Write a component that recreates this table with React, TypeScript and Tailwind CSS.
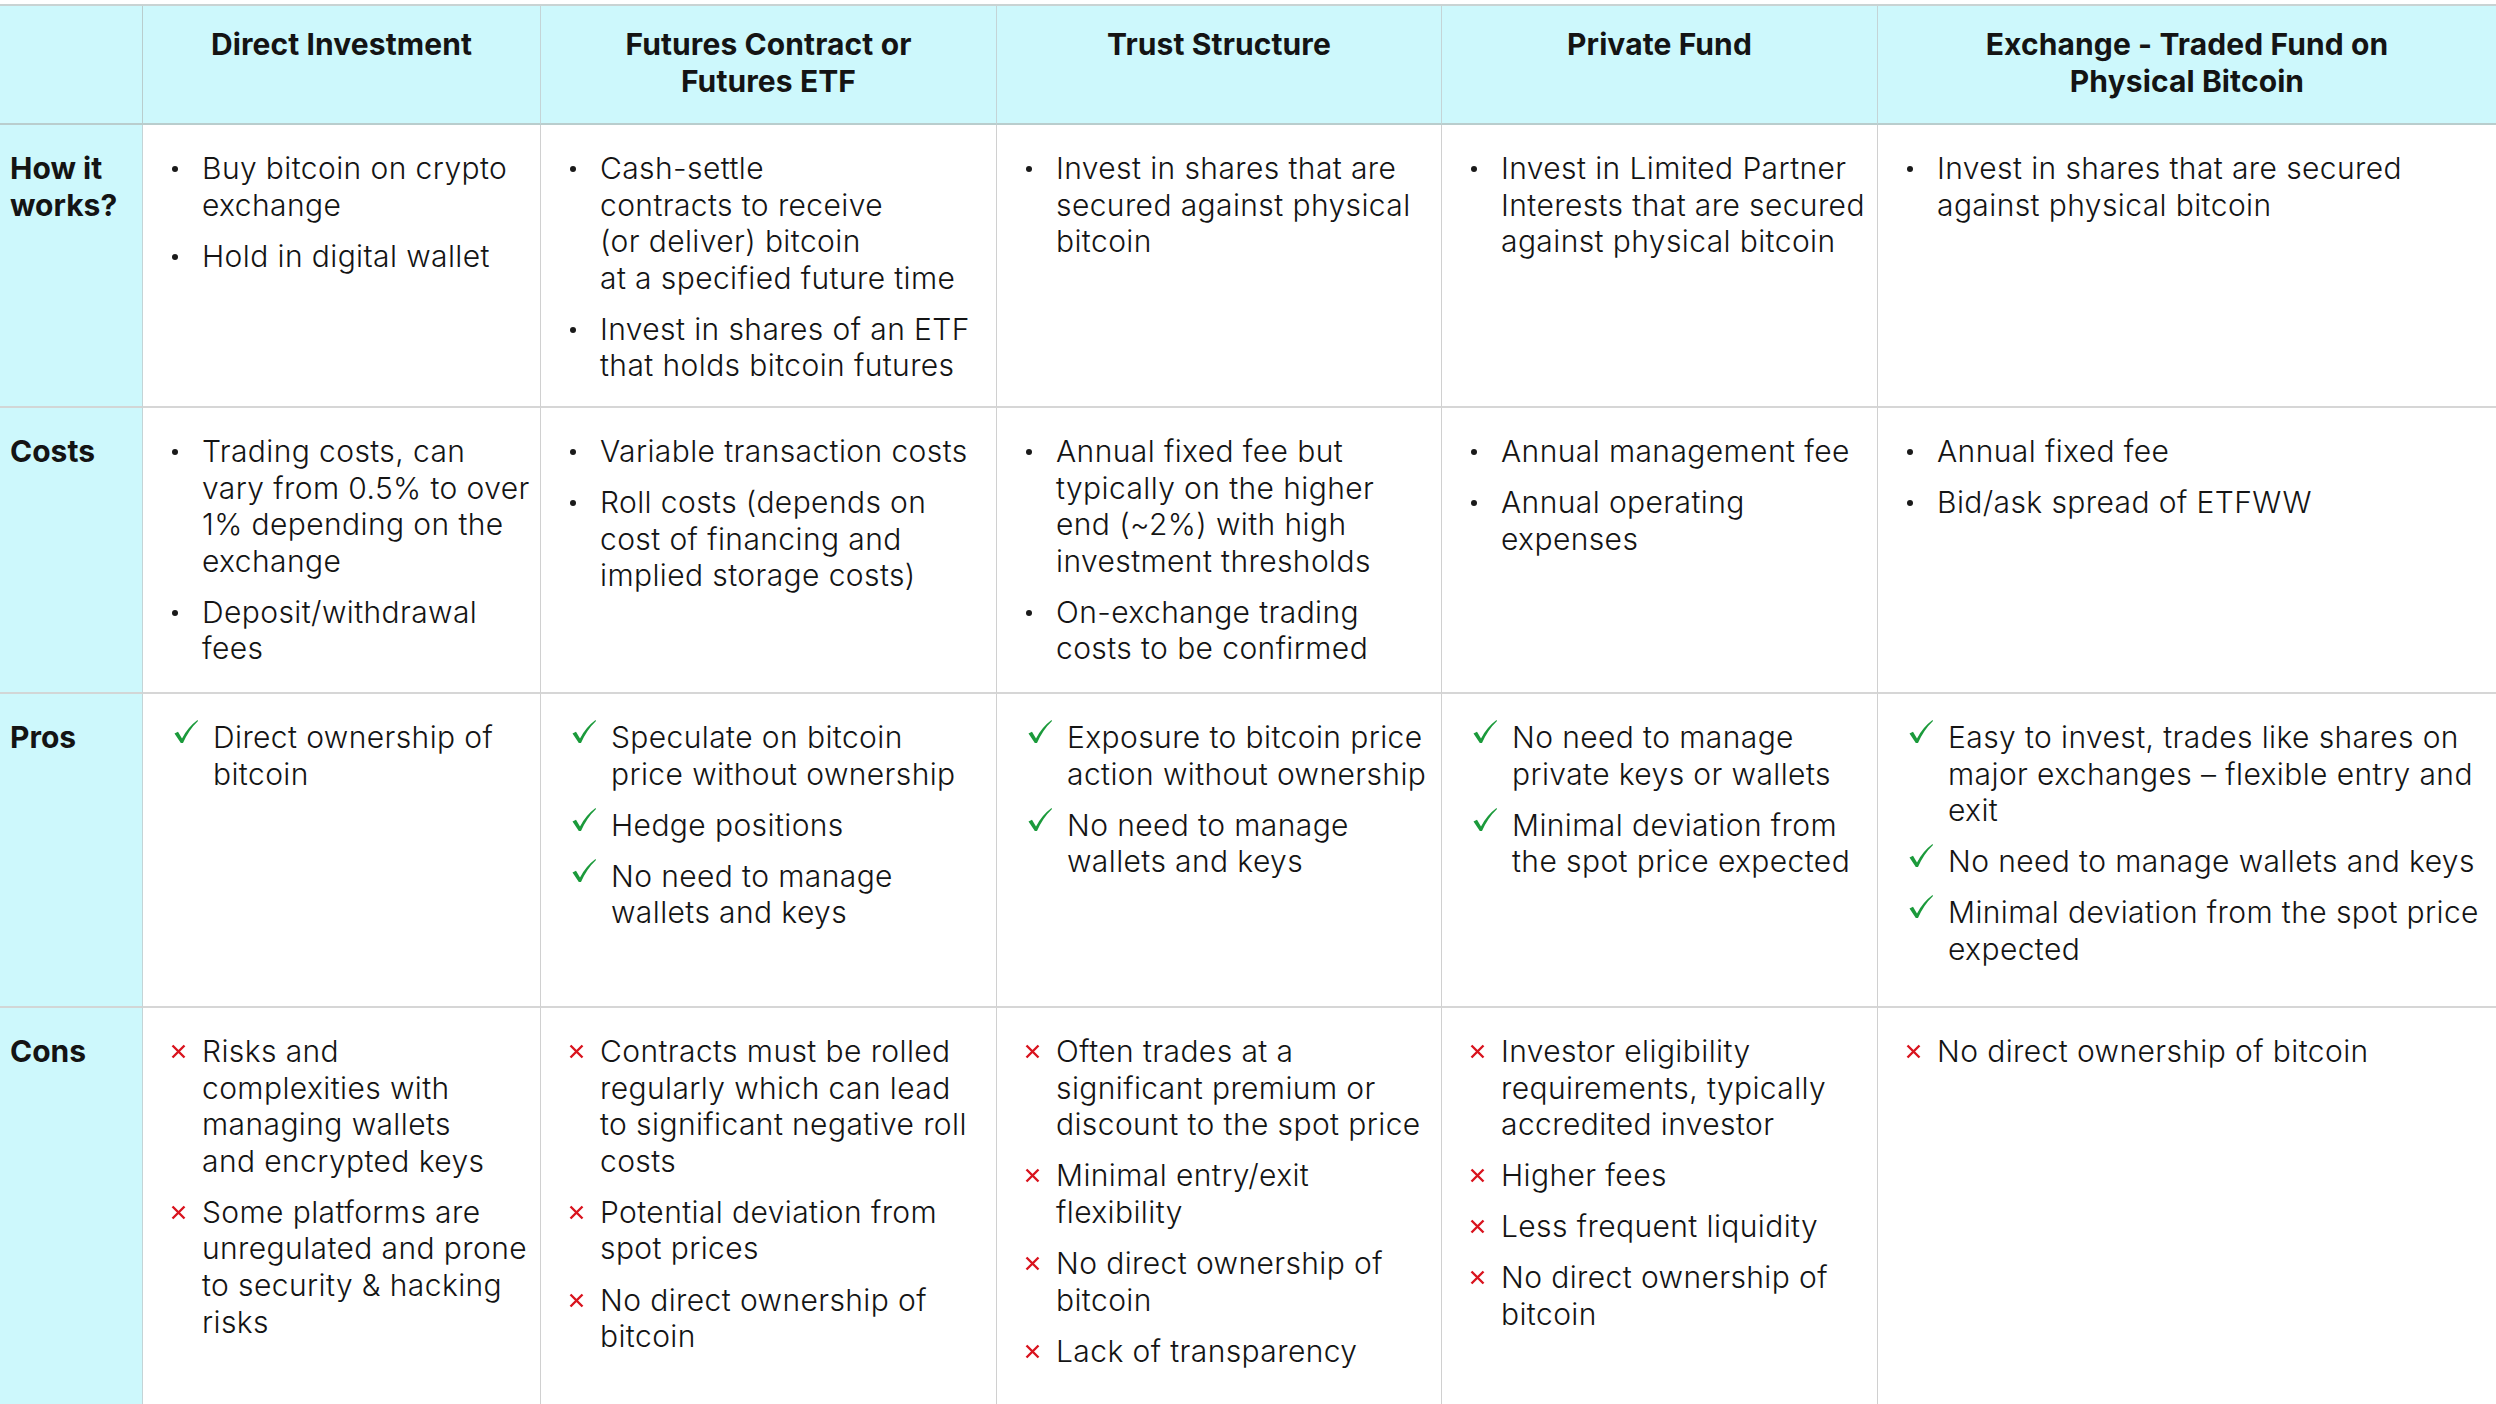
import React from "react";

type Kind = "dot" | "check" | "cross";

interface Column {
  title: string[];
  how: string[][];
  costs: string[][];
  pros: string[][];
  cons: string[][];
}

const columns: Column[] = [
  {
    title: ["Direct Investment"],
    how: [["Buy bitcoin on crypto", "exchange"], ["Hold in digital wallet"]],
    costs: [
      ["Trading costs, can", "vary from 0.5% to over", "1% depending on the", "exchange"],
      ["Deposit/withdrawal", "fees"],
    ],
    pros: [["Direct ownership of", "bitcoin"]],
    cons: [
      ["Risks and", "complexities with", "managing wallets", "and encrypted keys"],
      ["Some platforms are", "unregulated and prone", "to security & hacking", "risks"],
    ],
  },
  {
    title: ["Futures Contract or", "Futures ETF"],
    how: [
      ["Cash-settle", "contracts to receive", "(or deliver) bitcoin", "at a specified future time"],
      ["Invest in shares of an ETF", "that holds bitcoin futures"],
    ],
    costs: [
      ["Variable transaction costs"],
      ["Roll costs (depends on", "cost of financing and", "implied storage costs)"],
    ],
    pros: [
      ["Speculate on bitcoin", "price without ownership"],
      ["Hedge positions"],
      ["No need to manage", "wallets and keys"],
    ],
    cons: [
      ["Contracts must be rolled", "regularly which can lead", "to significant negative roll", "costs"],
      ["Potential deviation from", "spot prices"],
      ["No direct ownership of", "bitcoin"],
    ],
  },
  {
    title: ["Trust Structure"],
    how: [["Invest in shares that are", "secured against physical", "bitcoin"]],
    costs: [
      ["Annual fixed fee but", "typically on the higher", "end (~2%) with high", "investment thresholds"],
      ["On-exchange trading", "costs to be confirmed"],
    ],
    pros: [
      ["Exposure to bitcoin price", "action without ownership"],
      ["No need to manage", "wallets and keys"],
    ],
    cons: [
      ["Often trades at a", "significant premium or", "discount to the spot price"],
      ["Minimal entry/exit", "flexibility"],
      ["No direct ownership of", "bitcoin"],
      ["Lack of transparency"],
    ],
  },
  {
    title: ["Private Fund"],
    how: [["Invest in Limited Partner", "Interests that are secured", "against physical bitcoin"]],
    costs: [["Annual management fee"], ["Annual operating", "expenses"]],
    pros: [
      ["No need to manage", "private keys or wallets"],
      ["Minimal deviation from", "the spot price expected"],
    ],
    cons: [
      ["Investor eligibility", "requirements, typically", "accredited investor"],
      ["Higher fees"],
      ["Less frequent liquidity"],
      ["No direct ownership of", "bitcoin"],
    ],
  },
  {
    title: ["Exchange - Traded Fund on", "Physical Bitcoin"],
    how: [["Invest in shares that are secured", "against physical bitcoin"]],
    costs: [["Annual fixed fee"], ["Bid/ask spread of ETFWW"]],
    pros: [
      ["Easy to invest, trades like shares on", "major exchanges – flexible entry and", "exit"],
      ["No need to manage wallets and keys"],
      ["Minimal deviation from the spot price", "expected"],
    ],
    cons: [["No direct ownership of bitcoin"]],
  },
];

const rows: { label: string[]; key: "how" | "costs" | "pros" | "cons"; kind: Kind }[] = [
  { label: ["How it", "works?"], key: "how", kind: "dot" },
  { label: ["Costs"], key: "costs", kind: "dot" },
  { label: ["Pros"], key: "pros", kind: "check" },
  { label: ["Cons"], key: "cons", kind: "cross" },
];

const Marker = ({ kind }: { kind: Kind }) => {
  if (kind === "check") {
    return (
      <span className="w-[70px] shrink-0 pl-[30px]">
        <svg width="26" height="26" viewBox="0 0 26 26" fill="none">
          <path d="M1.5 14.5 L5 12.8 L9 19.5 Q14.5 8.5 24.5 1 L25 2 Q16 10.5 10 24 L7.8 24 Z" fill="#1b9a3b" />
        </svg>
      </span>
    );
  }
  if (kind === "cross") {
    return (
      <span className="w-[59px] shrink-0 pl-[28px] pt-[11px]">
        <svg width="15" height="15" viewBox="0 0 15 15">
          <path d="M1.5 1.5 L13.5 13.5 M13.5 1.5 L1.5 13.5" stroke="#d9141e" strokeWidth="2.4" />
        </svg>
      </span>
    );
  }
  return (
    <span className="w-[59px] shrink-0 pl-[29px] pt-[16px]">
      <span className="block h-[6px] w-[6px] rounded-full bg-[#1a1a1a]" />
    </span>
  );
};

const Items = ({ items, kind }: { items: string[][]; kind: Kind }) => (
  <ul className="flex flex-col gap-[14.5px]">
    {items.map((lines, i) => (
      <li key={i} className="flex items-start">
        <Marker kind={kind} />
        <div className="flex flex-col">
          {lines.map((l, j) => (
            <span key={j} className="whitespace-nowrap">
              {l}
            </span>
          ))}
        </div>
      </li>
    ))}
  </ul>
);

const App = () => {
  return (
    <div className="h-[1404px] w-[2496px] overflow-hidden bg-white pt-[4px] font-['Inter',sans-serif] text-[30px] font-light leading-[36.6px] tracking-[0.4px] text-[#141414]">
      <div className="grid grid-cols-[143px_398px_456px_445px_436px_1fr] grid-rows-[119px_283px_286px_314px_410px] border-t-2 border-[#c9d3d3]">
        {/* header row */}
        <div className="border-b-2 border-r border-[#b9cdcd] bg-[#cdf8fc]" />
        {columns.map((c, i) => (
          <div
            key={i}
            className={`flex flex-col items-center border-b-2 border-[#b9cdcd] bg-[#cdf8fc] pt-[20px] font-bold tracking-[0.1px] ${i < columns.length - 1 ? "border-r border-r-[#c4d4d6]" : ""}`}
          >
            {c.title.map((t, j) => (
              <span key={j} className="whitespace-nowrap">
                {t}
              </span>
            ))}
          </div>
        ))}

        {rows.map((r, ri) => (
          <React.Fragment key={r.key}>
            <div
              className={`flex flex-col bg-[#cdf8fc] pl-[10px] pt-[25px] font-bold tracking-[0px] ${ri < rows.length - 1 ? "border-b-2 border-[#d2d6d6]" : ""} border-r border-r-[#c4d4d6]`}
            >
              {r.label.map((l, j) => (
                <span key={j}>{l}</span>
              ))}
            </div>
            {columns.map((c, ci) => (
              <div
                key={ci}
                className={`pt-[25px] ${ri < rows.length - 1 ? "border-b-2 border-[#d6d6d6]" : ""} ${ci < columns.length - 1 ? "border-r border-r-[#d0d0d0]" : ""}`}
              >
                <Items items={c[r.key]} kind={r.kind} />
              </div>
            ))}
          </React.Fragment>
        ))}
      </div>
    </div>
  );
};

export default App;
